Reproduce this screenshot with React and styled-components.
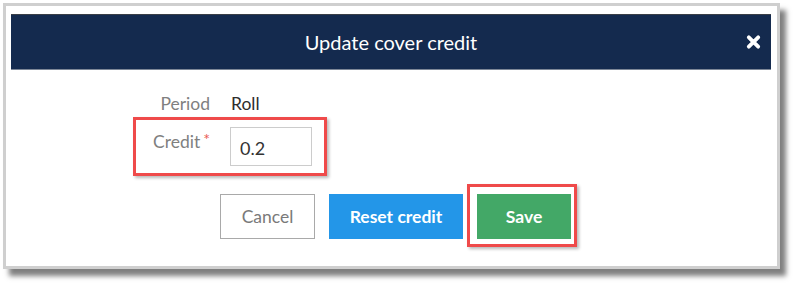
import React, { useState } from 'react'
import styled, { createGlobalStyle, css } from 'styled-components'

const GlobalStyle = createGlobalStyle`
    html, body {
        margin: 0;
        padding: 0;
        background: #ffffff;
        overflow: hidden;
    }
    body {
        font-family: Lato, "Open Sans", sans-serif;
    }
`

function CloseIcon() {
    return (
        <svg width="15" height="15" viewBox="0 0 15 15">
            <path d="M2.8 2.8 L12.2 12.2 M12.2 2.8 L2.8 12.2" stroke="#ffffff" strokeWidth="3.8" strokeLinecap="round" />
        </svg>
    )
}

function App() {
    const [credit, setCredit] = useState("0.2");

    return (
        <Page>
            <GlobalStyle />
            <Frame>
                <Header>
                    <Title>Update cover credit</Title>
                    <Close aria-label="Close"><CloseIcon /></Close>
                </Header>
                <Body>
                    <Form>
                        <Row>
                            <Label>Period</Label>
                            <Value>Roll</Value>
                        </Row>
                        <Row highlight>
                            <Label top>Credit<Required>*</Required></Label>
                            <Input value={credit} onChange={e => setCredit(e.target.value)} />
                        </Row>
                    </Form>
                    <Actions>
                        <Button variant="cancel">Cancel</Button>
                        <Button variant="reset">Reset credit</Button>
                        <Button variant="save" highlight>Save</Button>
                    </Actions>
                </Body>
            </Frame>
        </Page>
    )
}

export default App

const redBox = css`
    position: relative;
    &::after{
        content: "";
        position: absolute;
        border: 3px solid #ef4a4a;
        box-shadow: 2px 2px 3px rgba(0,0,0,0.28);
        pointer-events: none;
    }
`

const Page = styled.div`
    width: 794px;
    height: 284px;
    padding: 3px 0 0 3px;
    box-sizing: border-box;
`

const Frame = styled.div`
    width: 777px;
    height: 266px;
    box-sizing: border-box;
    border: 3px solid #cfcfcf;
    background: #ffffff;
    box-shadow: 6px 7px 5px rgba(0,0,0,0.5);
    padding: 8px 6px 0 5px;
    display: flex;
    flex-direction: column;
`

const Header = styled.div`
    height: 56px;
    box-sizing: border-box;
    background: #142a4e;
    border-top: 1px solid #3a3f47;
    border-bottom: 1px solid #7d8797;
    display: flex;
    align-items: center;
    justify-content: center;
    position: relative;
`

const Title = styled.h3`
    margin: 0;
    color: #ffffff;
    font-family: Lato, sans-serif;
    font-weight: 400;
    font-size: 20px;
`

const Close = styled.button`
    position: absolute;
    right: 10px;
    top: 50%;
    transform: translateY(-50%);
    background: none;
    border: none;
    padding: 0;
    display: flex;
    cursor: pointer;
`

const Body = styled.div`
    padding: 23px 0 0 0;
    display: flex;
    flex-direction: column;
`

const Form = styled.div`
    display: flex;
    flex-direction: column;
    gap: 12px;
    padding-left: 122px;
`

const Row = styled.div`
    display: flex;
    gap: 20px;
    width: fit-content;
    ${p => p.highlight && css`
        ${redBox}
        &::after{
            top: -10px;
            bottom: -10px;
            left: 0;
            right: -15px;
        }
    `}
`

const Label = styled.div`
    width: 77px;
    text-align: right;
    color: #808080;
    font-size: 17.5px;
    line-height: 22px;
    padding-top: ${p => p.top ? "1px" : "0"};
`

const Required = styled.span`
    color: #ea5a55;
    font-size: 16px;
    vertical-align: 3px;
    margin-left: 3px;
`

const Value = styled.div`
    color: #2e2e2e;
    font-size: 17.5px;
    line-height: 22px;
    padding-left: 1px;
`

const Input = styled.input`
    width: 82px;
    height: 39px;
    box-sizing: border-box;
    border: 1px solid #cccccc;
    padding: 3px 0 0 9px;
    font-family: Lato, sans-serif;
    font-size: 18px;
    color: #333333;
    outline: none;
`

const variants = {
    cancel: css`
        width: 95px;
        background: #ffffff;
        border: 1px solid #a9a9a9;
        color: #7a7a7a;
        font-weight: 400;
    `,
    reset: css`
        width: 134px;
        background: #2396e8;
        border: 1px solid #2396e8;
        color: #ffffff;
        font-weight: 700;
    `,
    save: css`
        width: 94px;
        background: #43a867;
        border: 1px solid #43a867;
        color: #ffffff;
        font-weight: 700;
    `,
}

const Actions = styled.div`
    display: flex;
    gap: 14px;
    padding-left: 209px;
    margin-top: 28px;
`

const Button = styled.button`
    height: 45px;
    box-sizing: border-box;
    font-family: Lato, sans-serif;
    font-size: 17.5px;
    cursor: pointer;
    ${p => variants[p.variant]}
    ${p => p.highlight && css`
        ${redBox}
        &::after{
            top: -11px;
            bottom: -9px;
            left: -11px;
            right: -7px;
        }
    `}
`
